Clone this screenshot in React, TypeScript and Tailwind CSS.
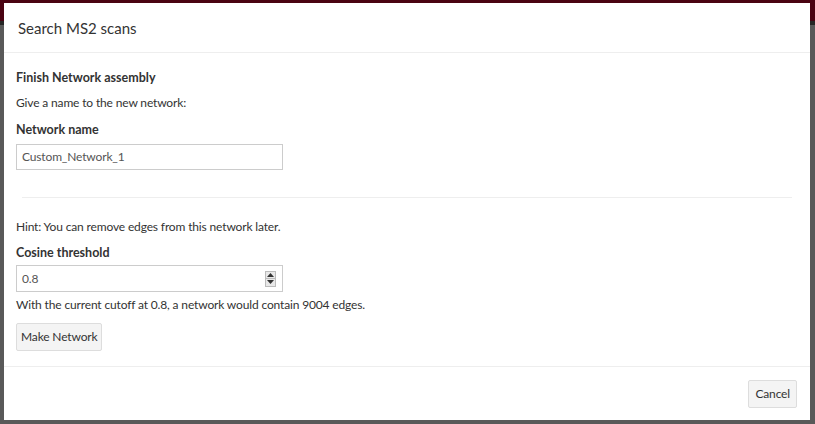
import React from 'react'

const font = { fontFamily: 'Lato, "Open Sans", sans-serif' }

function Spinner() {
  return (
    <div className="flex flex-col w-[11px] h-[16px] border border-[#bbb] bg-[#e8e8e8]">
      <div className="flex-1 flex items-center justify-center border-b border-[#bbb]">
        <svg width="7" height="4" viewBox="0 0 7 4"><path d="M3.5 0 L7 4 L0 4 Z" fill="#333" /></svg>
      </div>
      <div className="flex-1 flex items-center justify-center">
        <svg width="7" height="4" viewBox="0 0 7 4"><path d="M0 0 L7 0 L3.5 4 Z" fill="#333" /></svg>
      </div>
    </div>
  )
}

export default function App() {
  return (
    <div className="relative w-[815px] h-[424px] overflow-hidden bg-[#595959]" style={font}>
      <div className="h-[21px] bg-[#4a0312]" />
      <div className="h-[4px] bg-[#262626]" />
      <div className="absolute left-[4px] top-[3px] w-[806px] h-[417px] bg-white text-[#333] flex flex-col">
        <div className="h-[50px] px-[14px] flex items-center border-b border-[#eee]">
          <span className="text-[15px] pt-[1px]">Search MS2 scans</span>
        </div>
        <div className="px-[12px] pt-[16px] h-[313px] text-[12px] tracking-[-0.15px]">
          <div className="h-[18px] leading-[18px] font-bold text-[12.5px] tracking-normal">Finish Network assembly</div>
          <div className="mt-[7px] h-[18px] leading-[18px]">Give a name to the new network:</div>
          <div className="mt-[9px] h-[18px] leading-[18px] font-bold text-[12.5px] tracking-normal">Network name</div>
          <div className="mt-[5px] w-[267px] h-[26px] border border-[#ccc] px-[5px] flex items-center text-[#555]">
            Custom_Network_1
          </div>
          <div className="mt-[27px] mx-[6px] border-t border-[#eee]" />
          <div className="mt-[20px] h-[18px] leading-[18px]">Hint: You can remove edges from this network later.</div>
          <div className="mt-[8px] h-[18px] leading-[18px] font-bold text-[12.5px] tracking-normal">Cosine threshold</div>
          <div className="mt-[3px] w-[267px] h-[27px] border border-[#ccc] pl-[5px] pr-[6px] flex items-center justify-between text-[#555]">
            <span>0.8</span>
            <Spinner />
          </div>
          <div className="mt-[4px] h-[18px] leading-[18px]">With the current cutoff at 0.8, a network would contain 9004 edges.</div>
          <button className="mt-[9px] h-[28px] px-[4px] bg-[#f4f4f4] border border-[#ddd] rounded-[2px] text-[#333]">
            Make Network
          </button>
        </div>
        <div className="flex-1 border-t border-[#eee] flex items-start justify-end pt-[13px] pr-[13px]">
          <button className="h-[28px] px-[6px] bg-[#f4f4f4] border border-[#ddd] rounded-[2px] text-[12px] tracking-[-0.15px] text-[#333]">
            Cancel
          </button>
        </div>
      </div>
    </div>
  )
}
